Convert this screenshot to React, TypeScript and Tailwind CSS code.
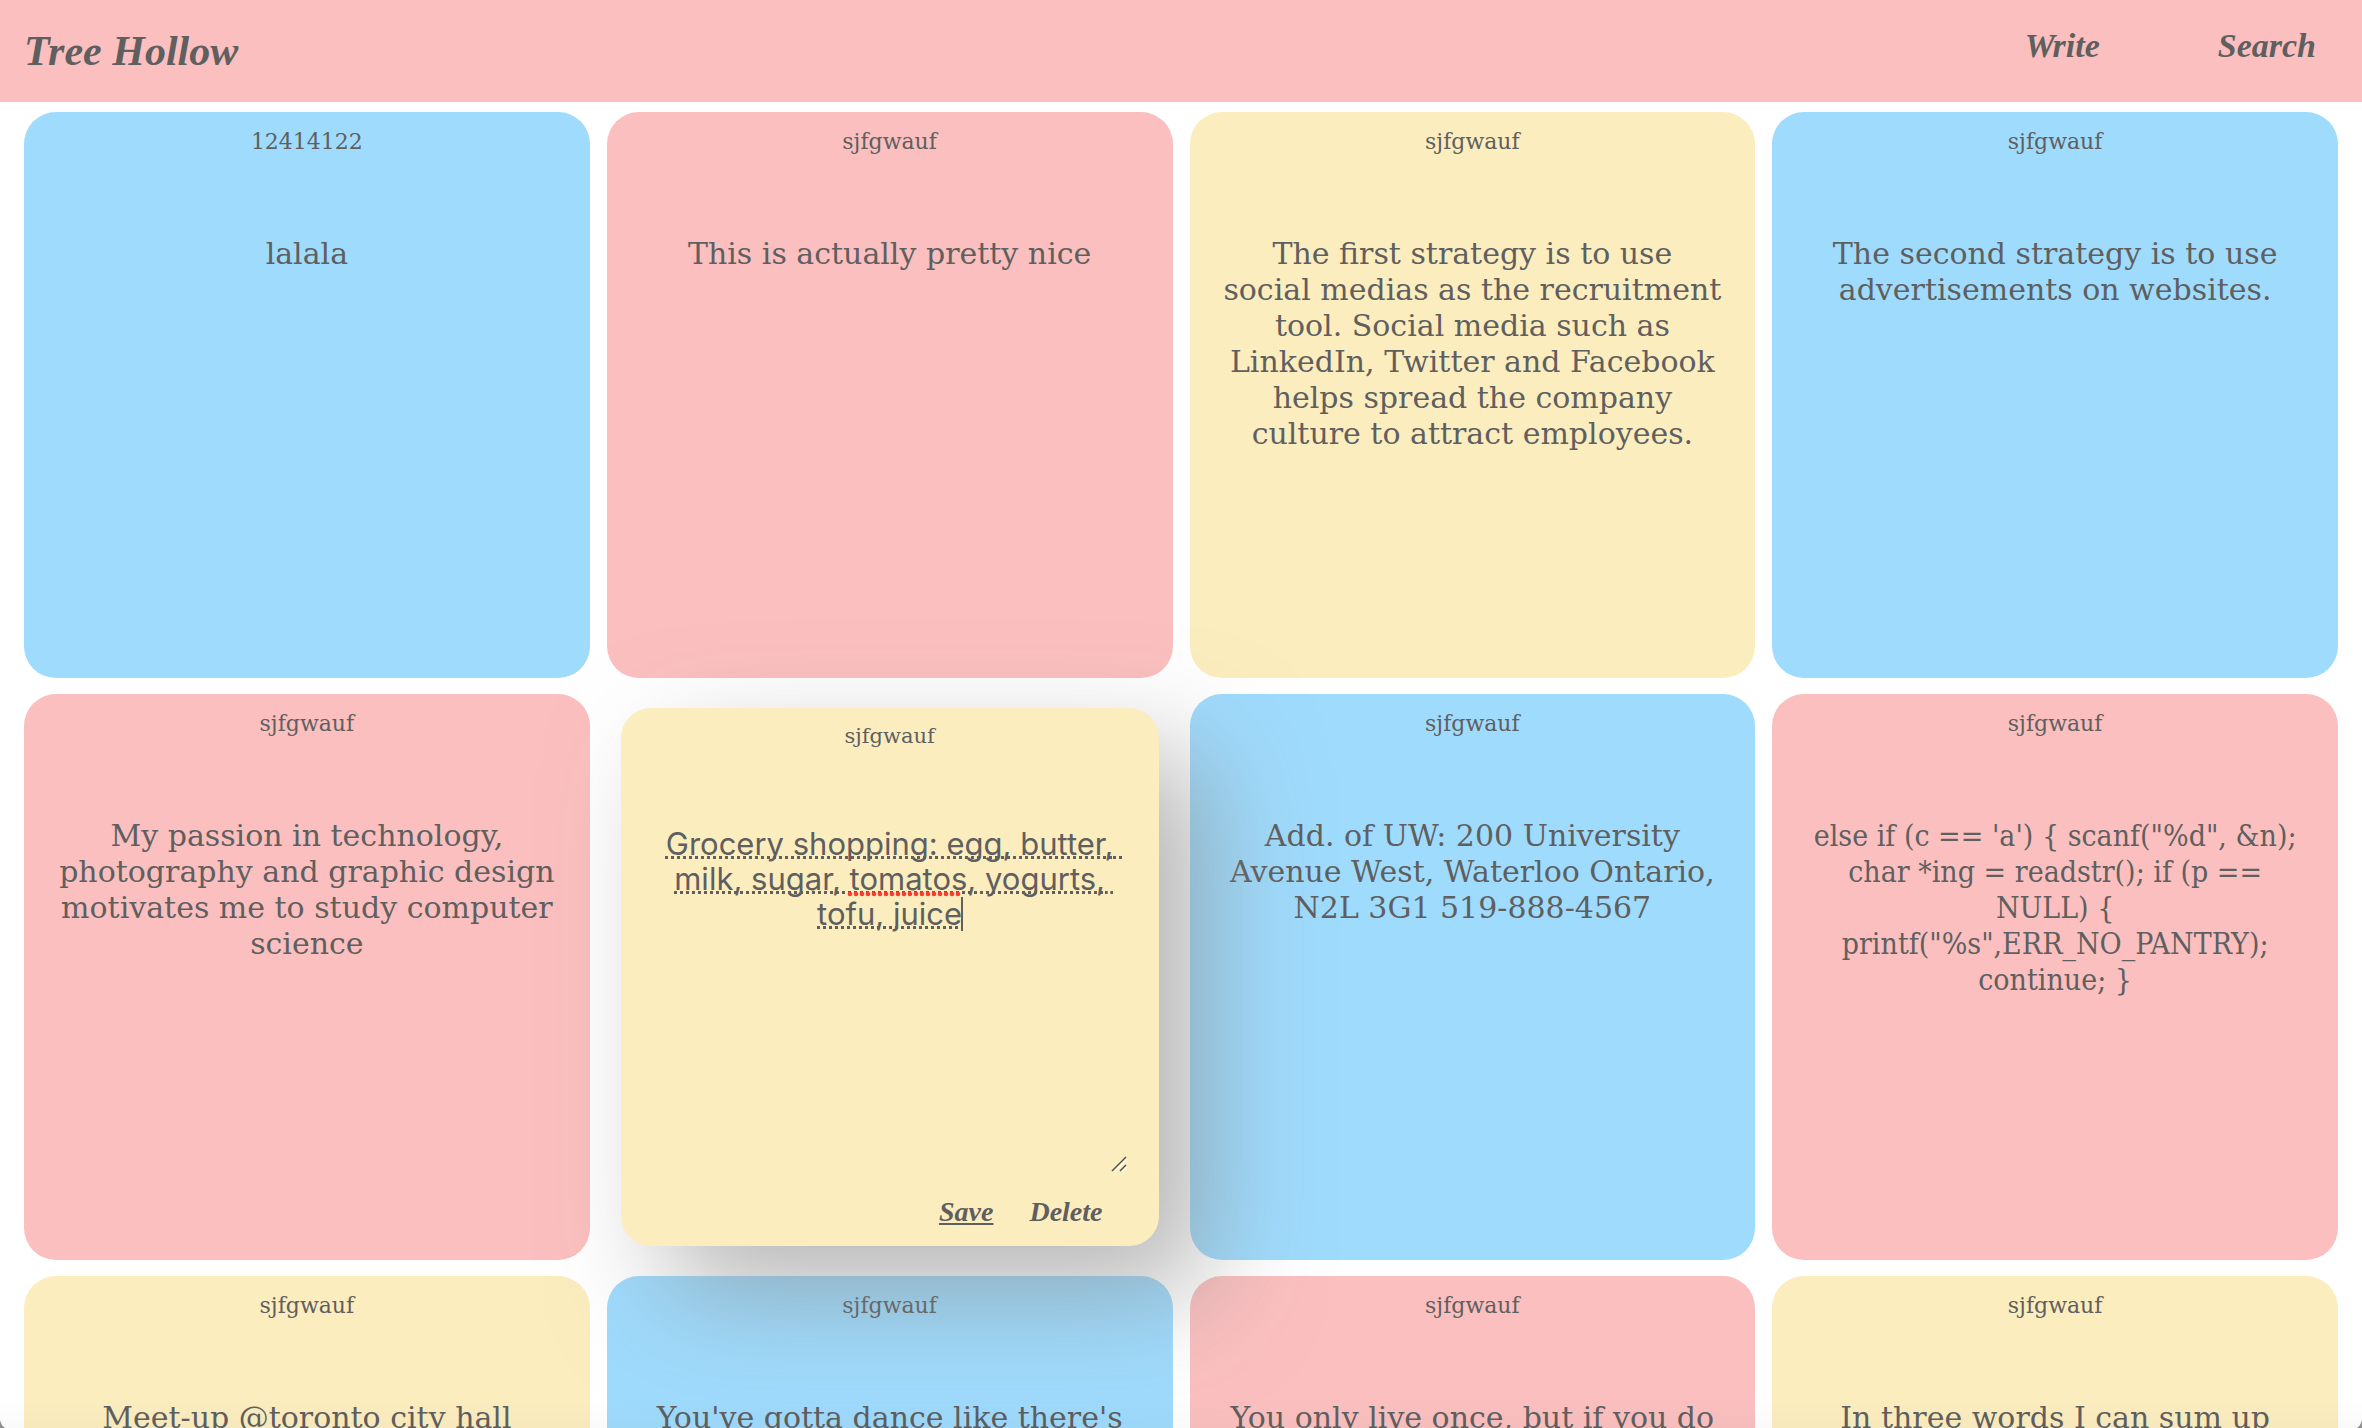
import { useState } from "react";

type Tone = "blue" | "pink" | "yellow";

interface Note {
  id: number;
  author: string;
  text: string;
  tone: Tone;
  code?: boolean;
  editing?: boolean;
}

const toneClass: Record<Tone, string> = {
  blue: "bg-[#9fdbfd]",
  pink: "bg-[#fbbfbf]",
  yellow: "bg-[#fcedbf]",
};

const slab = "font-['DejaVu_Serif',serif]";
const slabCondensed = "font-['DejaVu_Serif_Condensed','DejaVu_Serif',serif]";
const script = "font-['Liberation_Serif',serif] font-bold italic";

const notes: Note[] = [
  { id: 1, author: "12414122", text: "lalala", tone: "blue" },
  { id: 2, author: "sjfgwauf", text: "This is actually pretty nice", tone: "pink" },
  {
    id: 3,
    author: "sjfgwauf",
    text: "The first strategy is to use\nsocial medias as the recruitment\ntool. Social media such as\nLinkedIn, Twitter and Facebook\nhelps spread the company\nculture to attract employees.",
    tone: "yellow",
  },
  {
    id: 4,
    author: "sjfgwauf",
    text: "The second strategy is to use\nadvertisements on websites.",
    tone: "blue",
  },
  {
    id: 5,
    author: "sjfgwauf",
    text: "My passion in technology,\nphotography and graphic design\nmotivates me to study computer\nscience",
    tone: "pink",
  },
  {
    id: 6,
    author: "sjfgwauf",
    text: "Grocery shopping: egg, butter, milk, sugar, tomatos, yogurts, tofu, juice",
    tone: "yellow",
    editing: true,
  },
  {
    id: 7,
    author: "sjfgwauf",
    text: "Add. of UW: 200 University\nAvenue West, Waterloo Ontario,\nN2L 3G1 519-888-4567",
    tone: "blue",
  },
  {
    id: 8,
    author: "sjfgwauf",
    text: "else if (c == 'a') { scanf(\"%d\", &n);\nchar *ing = readstr(); if (p ==\nNULL) {\nprintf(\"%s\",ERR_NO_PANTRY);\ncontinue; }",
    tone: "pink",
    code: true,
  },
  { id: 9, author: "sjfgwauf", text: "Meet-up @toronto city hall", tone: "yellow" },
  { id: 10, author: "sjfgwauf", text: "You've gotta dance like there's", tone: "blue" },
  { id: 11, author: "sjfgwauf", text: "You only live once, but if you do", tone: "pink" },
  { id: 12, author: "sjfgwauf", text: "In three words I can sum up", tone: "yellow" },
];

function NoteCard({ note }: { note: Note }) {
  return (
    <article className={`aspect-square rounded-[32px] px-6 pt-4 text-center ${toneClass[note.tone]}`}>
      <h2 className={`text-[22px] leading-7 ${slab}`}>{note.author}</h2>
      <p className={`mt-20 text-[30px] leading-9 whitespace-pre-line ${note.code ? slabCondensed : slab}`}>
        {note.text}
      </p>
    </article>
  );
}

const squiggleDots = [3, 9, 15, 21, 27, 33, 39, 45, 51, 57, 63, 69, 75, 81, 87, 93, 99, 105, 111];

function NoteEditor({ note }: { note: Note }) {
  const [text, setText] = useState(note.text);
  return (
    <article
      className={`relative z-10 m-3.5 flex aspect-square flex-col rounded-[30px] px-7 py-4 text-center shadow-[46px_46px_112px_rgba(136,136,136,0.62)] ${toneClass[note.tone]}`}
    >
      <h2 className={`text-[21px] leading-6 ${slab}`}>{note.author}</h2>
      <div className="relative mt-19 mb-5 flex flex-1">
        <textarea
          aria-label="Note text"
          spellCheck={false}
          value={text}
          onChange={(e) => setText(e.target.value)}
          className="w-full resize overflow-hidden bg-transparent px-2 pt-0.5 text-center font-['Inter',sans-serif] text-[31px] leading-[35px] underline decoration-dotted decoration-[3px] underline-offset-1 outline-none [text-decoration-skip-ink:none] [&::-webkit-resizer]:hidden"
        />
        {/* spelling mark and caret drawn over the text */}
        <svg className="pointer-events-none absolute top-[67px] left-[198px]" width="114" height="6" aria-hidden="true">
          {squiggleDots.map((x) => (
            <circle key={x} cx={x} cy="3" r="2.3" fill="#ff3b30" />
          ))}
        </svg>
        <span className="pointer-events-none absolute top-[73px] left-[312px] h-[34px] w-0.5 bg-[#5f5f5f]" />
        <svg
          className="pointer-events-none absolute right-1 bottom-0.5"
          width="16"
          height="16"
          viewBox="0 0 16 16"
          aria-hidden="true"
          fill="none"
        >
          <path d="M3 16L16 3M11 16l5-5" stroke="#ffffff" strokeWidth="1.2" />
          <path d="M1 15L15 1M9 15l6-6" stroke="#4a4a4a" strokeWidth="1.4" />
        </svg>
      </div>
      <div className={`flex items-center justify-end gap-9 pr-7 text-[28px] leading-9 ${script}`}>
        <button type="button" className="cursor-pointer underline decoration-2 underline-offset-2">
          Save
        </button>
        <button type="button" className="cursor-pointer">
          Delete
        </button>
      </div>
    </article>
  );
}

export default function App() {
  return (
    <div className="relative flex h-screen flex-col overflow-hidden bg-white text-[#5f5f5f]">
      <header className={`flex h-[102px] shrink-0 items-center justify-between bg-[#fbbfbf] pr-[46px] pl-6 ${script}`}>
        <h1 className="text-[42px] leading-[48px]">Tree Hollow</h1>
        <nav className="mb-2.5 flex gap-[118px] text-[34px] leading-10">
          <a href="#write">Write</a>
          <a href="#search">Search</a>
        </nav>
      </header>
      <main className="grid flex-1 grid-cols-4 content-start gap-x-[17px] gap-y-4 overflow-y-auto px-6 pt-2.5 [scrollbar-width:none]">
        {notes.map((note) =>
          note.editing ? <NoteEditor key={note.id} note={note} /> : <NoteCard key={note.id} note={note} />,
        )}
      </main>
      {/* window edge: faint shade and rounded bottom corners */}
      <div className="pointer-events-none absolute inset-x-0 bottom-0 z-20 flex h-8 items-end justify-between bg-linear-to-b from-transparent to-black/2">
        <svg width="5" height="8" viewBox="0 0 5 8" aria-hidden="true">
          <path d="M0 0Q1 5 5 8H0Z" fill="#8f8f8f" />
        </svg>
        <svg width="5" height="8" viewBox="0 0 5 8" aria-hidden="true">
          <path d="M5 0Q4 5 0 8H5Z" fill="#8f8f8f" />
        </svg>
      </div>
    </div>
  );
}
